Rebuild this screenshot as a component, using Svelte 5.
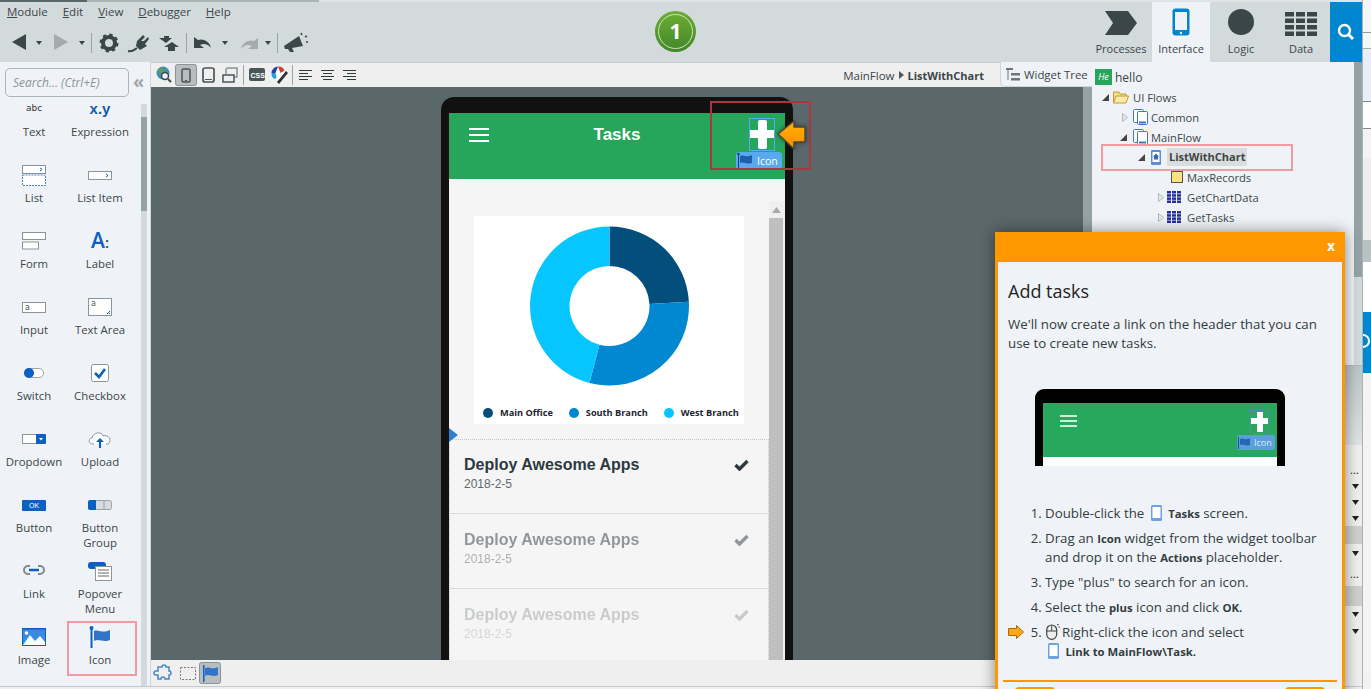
<script>
  const pieData = [
    { color: '#034e7b', from: 0, to: 87 },
    { color: '#0288d1', from: 87, to: 194.6 },
    { color: '#06c5ff', from: 194.6, to: 360 }
  ];
  const cx = 135.5, cy = 90, R = 79.5, r = 40;
  const pt = (rad, a) => {
    const t = ((a - 90) * Math.PI) / 180;
    return `${(cx + rad * Math.cos(t)).toFixed(2)} ${(cy + rad * Math.sin(t)).toFixed(2)}`;
  };
  const slice = (s) => {
    const large = s.to - s.from > 180 ? 1 : 0;
    return `M${pt(R, s.from)} A${R} ${R} 0 ${large} 1 ${pt(R, s.to - 0.001)} L${pt(r, s.to - 0.001)} A${r} ${r} 0 ${large} 0 ${pt(r, s.from)} Z`;
  };
  const legend = [
    { label: 'Main Office', color: '#034e7b' },
    { label: 'South Branch', color: '#0288d1' },
    { label: 'West Branch', color: '#06c5ff' }
  ];
  const tasks = [1, 0.5, 0.22];
  const tree = [
    { d: 0, arrow: 'open', icon: 'folder', text: 'UI Flows' },
    { d: 1, arrow: 'closed', icon: 'flow', text: 'Common' },
    { d: 1, arrow: 'open', icon: 'flow', text: 'MainFlow' },
    { d: 2, arrow: 'open', icon: 'screen', text: 'ListWithChart', sel: true },
    { d: 3, arrow: '', icon: 'var', text: 'MaxRecords' },
    { d: 3, arrow: 'closed', icon: 'table', text: 'GetChartData' },
    { d: 3, arrow: 'closed', icon: 'table', text: 'GetTasks' }
  ];
  const propRows = [
    { h: 17, k: '' }, { h: 16, k: 'dots' }, { h: 16, k: 'arrow' }, { h: 16, k: 'arrow' }, { h: 16, k: 'arrow' },
    { h: 18, k: 'band' }, { h: 18, k: 'arrow' }, { h: 24, k: 'dots' }, { h: 20, k: 'band' }, { h: 16, k: 'arrow' }, { h: 18, k: 'arrow' }
  ];
</script>

<div class="app">
  <div class="main">
    <header class="topbar">
      <div class="top-left">
        <nav class="menu">
          <span><u>M</u>odule</span><span><u>E</u>dit</span><span><u>V</u>iew</span><span><u>D</u>ebugger</span><span><u>H</u>elp</span>
        </nav>
        <div class="tools">
          <svg width="300" height="22" viewBox="0 0 300 22">
            <g transform="translate(-10 -31)" fill="#3b4648">
              <path d="M12 42 L26 34 V50 Z"/><path d="M36 41 h6 l-3 4 Z"/>
              <path d="M54 34 L68 42 L54 50 Z" fill="#a3abad"/><path d="M79 41 h6 l-3 4 Z"/>
              <rect x="91" y="33" width="1" height="20" fill="#9aa4a7"/>
              <circle cx="109" cy="43" r="6" fill="none" stroke="#3b4648" stroke-width="4"/>
              <circle cx="109" cy="43" r="8.2" fill="none" stroke="#3b4648" stroke-width="2.6" stroke-dasharray="3.2 3.24"/>
              <path d="M137 41 L143 35 L145 37 L141 41 L144 41 L148 37 L149 39 L145 44 L147 46 L140 50 L136 46 Z"/>
              <path d="M128 51 C132 52 134 50 137 48" fill="none" stroke="#3b4648" stroke-width="2"/>
              <path d="M159 38 h5 v-2 h5 v2 h3 l-6 5 Z"/><path d="M172 42 L179 47 h-4 v4 h-7 v-4 h-4 Z"/>
              <rect x="186" y="33" width="1" height="20" fill="#9aa4a7"/>
              <path d="M194 37 v11 h10 l-4-3 c4-2 8-1 11 3 c-1-6-7-10-13-8 l-4-3 Z"/><path d="M222 41 h6 l-3 4 Z"/>
              <path d="M258 38 v11 h-10 l4-3 c-4-2-8-1-11 3 c1-6 7-10 13-8 l4-3 Z" fill="#a3abad"/><path d="M265 41 h6 l-3 4 Z"/>
              <rect x="277" y="33" width="1" height="20" fill="#9aa4a7"/>
              <path d="M284 46 L299 36 L303 46 L292 48 L294 52 L290 52 L288 49 L285 49 Z"/>
              <path d="M301 33 l1 2 M305 37 l2-1 M306 42 h2" stroke="#3b4648" stroke-width="1.6"/>
            </g>
          </svg>
        </div>
      </div>
      <div class="tabs">
        <div class="tab">
          <svg width="34" height="26" viewBox="0 0 34 26"><path d="M1 1 H24 L33 13 L24 25 H1 L9 13 Z" fill="#3b4648"/></svg>
          <span>Processes</span>
        </div>
        <div class="tab active">
          <svg width="18" height="28" viewBox="0 0 18 28"><rect x="0.5" y="0.5" width="17" height="27" rx="3" fill="#0086d1"/><rect x="3" y="4" width="12" height="18" fill="#eff3f7"/><circle cx="9" cy="25" r="1.2" fill="#eff3f7"/></svg>
          <span>Interface</span>
        </div>
        <div class="tab">
          <svg width="28" height="28" viewBox="0 0 28 28"><circle cx="14" cy="14" r="13" fill="#3b4648"/></svg>
          <span>Logic</span>
        </div>
        <div class="tab">
          <svg width="32" height="24" viewBox="0 0 32 24" fill="#3b4648">
            <rect x="0" y="0" width="9" height="4.5"/><rect x="11" y="0" width="9" height="4.5"/><rect x="22" y="0" width="10" height="4.5"/>
            <rect x="0" y="6.5" width="9" height="4.5"/><rect x="11" y="6.5" width="9" height="4.5"/><rect x="22" y="6.5" width="10" height="4.5"/>
            <rect x="0" y="13" width="9" height="4.5"/><rect x="11" y="13" width="9" height="4.5"/><rect x="22" y="13" width="10" height="4.5"/>
            <rect x="0" y="19.5" width="9" height="4.5"/><rect x="11" y="19.5" width="9" height="4.5"/><rect x="22" y="19.5" width="10" height="4.5"/>
          </svg>
          <span>Data</span>
        </div>
        <div class="search-tab">
          <svg width="18" height="18" viewBox="0 0 18 18"><circle cx="7.5" cy="7.5" r="5.5" fill="none" stroke="#fff" stroke-width="2.4"/><path d="M11.5 11.5 L16 16" stroke="#fff" stroke-width="3"/></svg>
        </div>
      </div>
    </header>

    <div class="body">
      <aside class="palette">
        <div class="search-row">
          <div class="search">Search... (Ctrl+E)</div>
          <span class="collapse">«</span>
        </div>
        <div class="pal-body">
          <div class="pal-grid">
            <div class="w"><div class="ic"><span class="abc">abc</span></div><span>Text</span></div>
            <div class="w"><div class="ic"><b class="xy">x.y</b></div><span>Expression</span></div>

            <div class="w"><div class="ic"><svg width="24" height="21" viewBox="0 0 24 21"><rect x=".5" y=".5" width="23" height="8" fill="#fff" stroke="#8b9598"/><path d="M18 3 l2 1.5 -2 1.5" fill="none" stroke="#0c60c2"/><rect x=".5" y="10" width="23" height="10.500" fill="#fff" stroke="#4a86c9" stroke-dasharray="2 1"/></svg></div><span>List</span></div>
            <div class="w"><div class="ic"><svg width="24" height="9" viewBox="0 0 24 9"><rect x=".5" y=".5" width="23" height="8" fill="#fff" stroke="#8b9598"/><path d="M18 3 l2 1.500 -2 1.500" fill="none" stroke="#0c60c2"/></svg></div><span>List Item</span></div>

            <div class="w"><div class="ic"><svg width="24" height="18" viewBox="0 0 24 18"><rect x=".5" y=".5" width="23" height="7" fill="#fff" stroke="#8b9598"/><rect x=".5" y="10" width="16" height="7" fill="#fff" stroke="#8b9598"/></svg></div><span>Form</span></div>
            <div class="w"><div class="ic"><b class="a">A<i>:</i></b></div><span>Label</span></div>

            <div class="w"><div class="ic"><svg width="24" height="11" viewBox="0 0 24 11"><rect x=".5" y=".5" width="23" height="10" fill="#fff" stroke="#8b9598"/><text x="3" y="8" font-size="8" font-family="DejaVu Sans" fill="#555">a</text></svg></div><span>Input</span></div>
            <div class="w"><div class="ic"><svg width="24" height="18" viewBox="0 0 24 18"><rect x=".5" y=".5" width="23" height="17" fill="#fff" stroke="#8b9598"/><text x="3" y="8" font-size="8" font-family="DejaVu Sans" fill="#555">a</text><path d="M19 16 l3-3 M21 16 l1-1" stroke="#0c60c2"/></svg></div><span>Text Area</span></div>

            <div class="w"><div class="ic"><svg width="20" height="10" viewBox="0 0 20 10"><rect x=".5" y=".5" width="19" height="9" rx="4.500" fill="#fff" stroke="#9aa4a7"/><circle cx="5" cy="5" r="5" fill="#0c60c2"/></svg></div><span>Switch</span></div>
            <div class="w"><div class="ic"><svg width="18" height="18" viewBox="0 0 18 18"><rect x=".5" y=".5" width="17" height="17" rx="2" fill="#fff" stroke="#8b9598"/><path d="M4 9 L8 13 L14 5" fill="none" stroke="#0c60c2" stroke-width="2.600"/></svg></div><span>Checkbox</span></div>

            <div class="w"><div class="ic"><svg width="24" height="10" viewBox="0 0 24 10"><rect x=".5" y=".5" width="14" height="9" fill="#fff" stroke="#8b9598"/><rect x="14" y="0" width="10" height="10" rx="1" fill="#0c60c2"/><path d="M17 4 h4 l-2 2.500 Z" fill="#fff"/></svg></div><span>Dropdown</span></div>
            <div class="w"><div class="ic"><svg width="24" height="19" viewBox="0 0 24 19"><path d="M6 14 H5 C0 14 0 8 4 8 C5 2 14 1 15 6 C20 4 25 10 20 14 H18" fill="#fff" stroke="#8b9598"/><path d="M12 8 L16 12 H13 V18 H11 V12 H8 Z" fill="#0c60c2"/></svg></div><span>Upload</span></div>

            <div class="w"><div class="ic"><div class="ok">OK</div></div><span>Button</span></div>
            <div class="w"><div class="ic"><svg width="24" height="10" viewBox="0 0 24 10"><rect x=".5" y=".5" width="23" height="9" rx="2" fill="#d8dbdd" stroke="#9aa4a7"/><path d="M16 0 v10" stroke="#9aa4a7"/><path d="M2 0 H8 V10 H2 Q0 10 0 8 V2 Q0 0 2 0Z" fill="#0c60c2"/></svg></div><span>Button Group</span></div>

            <div class="w"><div class="ic up"><svg width="24" height="12" viewBox="0 0 24 12"><path d="M8 2 H6 a4 4 0 0 0 0 8 H8 M16 2 H18 a4 4 0 0 1 0 8 H16" fill="none" stroke="#7f8a8d" stroke-width="2"/><path d="M7 6 H17" stroke="#0c60c2" stroke-width="2.500"/></svg></div><span>Link</span></div>
            <div class="w"><div class="ic"><svg width="24" height="19" viewBox="0 0 24 19"><rect x="0" y="0" width="18" height="7" rx="3" fill="#0c60c2"/><rect x="7.500" y="4.500" width="16" height="14" fill="#fff" stroke="#8b9598"/><path d="M10 8 h11 M10 11 h11 M10 14 h11" stroke="#666"/></svg></div><span>Popover Menu</span></div>

            <div class="w"><div class="ic"><svg width="24" height="18" viewBox="0 0 24 18"><rect x="0" y="0" width="24" height="18" fill="#0c60c2"/><rect x="1" y="1.500" width="22" height="15.500" fill="#3a8ade"/><circle cx="4.500" cy="5" r="1.800" fill="#fff"/><path d="M1 17 L8 7 L13 13 L18 8 L23 14 V17 Z" fill="#fff"/></svg></div><span>Image</span></div>
            <div class="w"><div class="ic"><svg width="22" height="22" viewBox="0 0 22 22"><rect x="1.500" y="1" width="2" height="21" fill="#0c60c2"/><circle cx="2.500" cy="2" r="2" fill="#0c60c2"/><path d="M5 5 C9 3 13 8 21 4 V14 C14 17 10 12 5 15 Z" fill="#2f74c6"/></svg></div><span>Icon</span></div>
          </div>
          <div class="pal-scroll"><div class="pal-thumb"></div></div>
        </div>
      </aside>

      <section class="center">
        <div class="tb2">
          <svg class="tb2-icons" width="205" height="24" viewBox="0 0 205 24">
            <g transform="translate(-156 -63)">
              <circle cx="163" cy="73" r="6.500" fill="#3f8fb5"/><path d="M158 70 q4-3 6 0 l-2 3 -3 0 Z" fill="#6a9f3c"/>
              <circle cx="165" cy="76" r="3.500" fill="#eef" stroke="#3b4648" stroke-width="1.500"/><path d="M168 79 l3 3" stroke="#3b4648" stroke-width="2"/>
              <rect x="175.500" y="64.500" width="21" height="21" rx="2" fill="#b8bec0" stroke="#8c9496"/>
              <rect x="182" y="69" width="8" height="13" rx="1.500" fill="none" stroke="#4a5558" stroke-width="1.500"/><rect x="185" y="80" width="2" height="1" fill="#4a5558"/>
              <rect x="203" y="68" width="11" height="14" rx="2" fill="none" stroke="#4a5558" stroke-width="1.700"/><rect x="205" y="79" width="7" height="1" fill="#4a5558"/>
              <path d="M226 74 v-4 q0-2 2-2 h9 v9 h-3" fill="none" stroke="#8c9496" stroke-width="1.500"/><rect x="223" y="75" width="11" height="7" fill="none" stroke="#4a5558" stroke-width="1.500"/>
              <rect x="243" y="65" width="1" height="20" fill="#9aa4a7"/>
              <rect x="249" y="68" width="16" height="13" rx="2" fill="#4a5558"/>
              <text x="250.500" y="77.500" font-size="7" font-weight="700" font-family="Liberation Sans" fill="#fff">CSS</text>
              <circle cx="278" cy="73" r="6.500" fill="#fff"/>
              <path d="M278 66.500 a6.500 6.500 0 0 0 -6.500 6.500 h4 Z" fill="#2b3f9f"/><path d="M278 66.500 a6.500 6.500 0 0 1 6.500 4 l-4 2.500 Z" fill="#d33b32"/><path d="M271.500 73 h4 l1 5 -2 1 a6.500 6.500 0 0 1 -3-6 Z" fill="#1e9fe0"/>
              <path d="M277 82 L286 71 L288 73 L279 84 Z" fill="#333"/>
              <rect x="292" y="65" width="1" height="20" fill="#9aa4a7"/>
              <path d="M299 70.500 h13 M299 73.500 h9 M299 76.500 h13 M299 79.500 h9 M321 70.500 h13 M323 73.500 h9 M321 76.500 h13 M323 79.500 h9 M343 70.500 h13 M347 73.500 h9 M343 76.500 h13 M347 79.500 h9" stroke="#2f3a3c"/>
            </g>
          </svg>
          <div class="crumb"><span>MainFlow</span><svg width="5" height="8" viewBox="0 0 5 8"><path d="M0 0 L5 4 L0 8 Z" fill="#555"/></svg><b>ListWithChart</b></div>
          <div class="wtree">
            <svg width="14" height="13" viewBox="0 0 14 13" fill="#6c777a"><rect x="0" y="0" width="7" height="2"/><rect x="1.500" y="0" width="1" height="12"/><rect x="5" y="5" width="9" height="2.500"/><rect x="5" y="10" width="9" height="2.500"/></svg>
            <span>Widget Tree</span>
          </div>
        </div>
        <div class="canvas-row">
          <div class="canvas">
            <div class="phone">
              <div class="screen">
                <div class="app-head">
                  <div class="burger"><i></i><i></i><i></i></div>
                  <div class="title">Tasks</div>
                  <div class="plus-wrap">
                    <div class="plus"><i class="ph"></i><i class="pv"></i></div>
                    <div class="icon-tag">
                      <svg width="16" height="15" viewBox="0 0 16 15"><rect x="1" y="0" width="1" height="15" fill="#0c3f8a"/><circle cx="1.500" cy="1" r="1.300" fill="#0c3f8a"/><path d="M3 3 C6 1 10 5 15 2 V10 C10 12 6 8 3 10 Z" fill="#1f5ea8"/></svg>
                      <span>Icon</span>
                    </div>
                  </div>
                </div>
                <div class="content">
                  <div class="content-main">
                    <div class="card">
                      <svg width="270" height="184" viewBox="0 0 270 184">
                        {#each pieData as s}<path d={slice(s)} fill={s.color}/>{/each}
                      </svg>
                      <div class="legend">
                        {#each legend as l}
                          <div class="leg"><i style="background:{l.color}"></i><span>{l.label}</span></div>
                        {/each}
                      </div>
                    </div>
                    <div class="list">
                      {#each tasks as op}
                        <div class="row">
                          <div class="row-text" style="opacity:{op}">
                            <div class="task">Deploy Awesome Apps</div>
                            <div class="date">2018-2-5</div>
                          </div>
                          <svg style="opacity:{op}" width="15" height="12" viewBox="0 0 15 12"><path d="M1.500 6 L5.500 10 L13.500 2" fill="none" stroke="#2c3a40" stroke-width="3.400"/></svg>
                        </div>
                      {/each}
                    </div>
                  </div>
                  <div class="phone-scroll">
                    <svg width="9" height="6" viewBox="0 0 9 6"><path d="M0 6 L4.500 0 L9 6 Z" fill="#aaa"/></svg>
                    <div class="phone-thumb"></div>
                  </div>
                </div>
              </div>
            </div>
          </div>
          <div class="canvas-scroll"></div>
        </div>
        <div class="bottom-bar">
          <svg width="70" height="24" viewBox="0 0 70 24">
            <path d="M6 6 h4 a2 2 0 0 1 4 0 h3 v4 a2 2 0 0 1 0 4 v4 h-4 a2 2 0 0 0 -4 0 h-3 v-4 h-2 a2 2 0 0 1 0 -4 h2 Z" fill="none" stroke="#4a86c9" stroke-width="1.500"/>
            <rect x="28.500" y="6.500" width="15" height="12" fill="none" stroke="#777" stroke-dasharray="2 1.500"/>
            <rect x="47.500" y="1.500" width="21" height="21" rx="2" fill="#b8bec0" stroke="#8c9496"/>
            <rect x="51" y="4" width="1.500" height="17" fill="#0c60c2"/><path d="M53 7 C57 5 61 9 66 6 V14 C61 17 57 12 53 15 Z" fill="#2f74c6"/>
          </svg>
        </div>
      </section>

      <aside class="side">
        <div class="tree-wrap">
          <div class="tree">
            <div class="tree-root"><div class="he">He</div><span>hello</span></div>
            {#each tree as t}
              <div class="node" style="padding-left:{10 + t.d * 18}px">
                <span class="tw">
                  {#if t.arrow === 'open'}<svg width="7" height="7" viewBox="0 0 7 7"><path d="M7 0 V7 H0 Z" fill="#444"/></svg>
                  {:else if t.arrow === 'closed'}<svg class="closed" width="6" height="9" viewBox="0 0 6 9"><path d="M.5 .5 L5.500 4.500 L.5 8.500 Z" fill="#e6e9ec" stroke="#b5b9bc"/></svg>{/if}
                </span>
                <span class="ni">
                  {#if t.icon === 'folder'}
                    <svg width="16" height="13" viewBox="0 0 16 13"><path d="M.5 12 V1 H6 L7 3 H13 V5" fill="#f4dc90" stroke="#c79a2c"/><path d="M.5 12 L3 5 H15.500 L13 12 Z" fill="#fbe9ae" stroke="#c79a2c"/></svg>
                  {:else if t.icon === 'flow'}
                    <svg class="shift2" width="15" height="16" viewBox="0 0 15 16"><rect x=".5" y=".5" width="10" height="13" rx="1" fill="#fff" stroke="#3a78c4"/><rect x="4.500" y="2.500" width="10" height="13" rx="1" fill="#fff" stroke="#3a78c4"/><rect x="6" y="12.500" width="7" height="2" fill="#3a78c4"/></svg>
                  {:else if t.icon === 'screen'}
                    <svg class="shift2" width="10" height="15" viewBox="0 0 10 15"><rect width="10" height="15" rx="1" fill="#5e8fd6"/><rect x="1.500" y="2" width="7" height="10" fill="#fff"/><path d="M5 3.500 L8 6.500 H7 V9.500 H3 V6.500 H2 Z" fill="#3a68b4"/></svg>
                  {:else if t.icon === 'var'}
                    <svg class="shift3" width="12" height="12" viewBox="0 0 12 12"><rect x=".5" y=".5" width="11" height="11" fill="#fbe27a" stroke="#555"/></svg>
                  {:else}
                    <svg width="14" height="12" viewBox="0 0 14 12" fill="#262fa0"><rect width="4" height="2.500"/><rect x="5" width="4" height="2.500"/><rect x="10" width="4" height="2.500"/><rect y="3.200" width="4" height="2.500"/><rect x="5" y="3.200" width="4" height="2.500"/><rect x="10" y="3.200" width="4" height="2.500"/><rect y="6.400" width="4" height="2.500"/><rect x="5" y="6.400" width="4" height="2.500"/><rect x="10" y="6.400" width="4" height="2.500"/><rect y="9.500" width="4" height="2.500"/><rect x="5" y="9.500" width="4" height="2.500"/><rect x="10" y="9.500" width="4" height="2.500"/></svg>
                  {/if}
                </span>
                <span class:sel={t.sel}>{t.text}</span>
              </div>
            {/each}
          </div>
          <div class="tree-scroll"><div class="tree-thumb"></div></div>
        </div>
        <div class="props">
          <div class="props-head"></div>
          {#each propRows as p}
            <div class="prow" class:band={p.k === 'band'} style="height:{p.h}px">
              {#if p.k === 'arrow'}<svg width="7" height="5" viewBox="0 0 7 5"><path d="M0 0 H7 L3.500 5 Z" fill="#222"/></svg>{/if}
              {#if p.k === 'dots'}<span>...</span>{/if}
            </div>
          {/each}
        </div>
      </aside>
    </div>
    <div class="footer"></div>
  </div>

  <div class="edge">
    <div class="e1"></div><div class="e2"></div><div class="e3"></div><div class="e4"></div><div class="e5"></div>
    <div class="e6"></div><div class="e7"></div><div class="e8"></div>
    <div class="e9"><i></i></div><div class="e10"></div>
  </div>

  <div class="badge"><span>1</span></div>
  <div class="hl hl-tree"></div>
  <div class="hl hl-pal"></div>
  <div class="hl hl-plus"></div>
  <svg class="orange-arrow" width="32" height="34" viewBox="0 0 32 34">
    <defs><linearGradient id="oa" x1="0" y1="0" x2="0" y2="1"><stop offset="0" stop-color="#ffb400"/><stop offset="1" stop-color="#ff8a00"/></linearGradient></defs>
    <path d="M2 15 L18 2 V8 H29 V23 H18 V30 Z" fill="url(#oa)" stroke="#4a4a3a" stroke-width="1.500" stroke-linejoin="round"/>
  </svg>
  <svg class="blue-tri" width="9" height="14" viewBox="0 0 9 14"><path d="M0 0 L9 7 L0 14 Z" fill="#2f80d0"/></svg>

  <div class="popup">
    <div class="pop-head"><span>x</span></div>
    <div class="pop-body">
      <h2>Add tasks</h2>
      <p>We'll now create a link on the header that you can use to create new tasks.</p>
      <div class="mini">
        <div class="mini-screen">
          <div class="mini-head">
            <div class="mini-burger"><i></i><i></i><i></i></div>
            <div class="mini-right">
              <div class="mini-plus"><i class="mh"></i><i class="mv"></i></div>
              <div class="mini-tag">
                <svg width="14" height="12" viewBox="0 0 14 12"><rect x="1" y="0" width="1" height="12" fill="#1d4f8f"/><path d="M3 2 C6 0 9 4 13 1 V8 C9 10 6 6 3 8 Z" fill="#2468b5"/></svg>
                <span>Icon</span>
              </div>
            </div>
          </div>
        </div>
      </div>
      <ol>
        <li>Double-click the <svg class="inl" width="11" height="16" viewBox="0 0 11 16"><rect width="11" height="16" rx="1.500" fill="#6ea2e0"/><rect x="1.500" y="2" width="8" height="11" fill="#fff"/></svg> <b>Tasks</b> screen.</li>
        <li>Drag an <b>Icon</b> widget from the widget toolbar and drop it on the <b>Actions</b> placeholder.</li>
        <li>Type "plus" to search for an icon.</li>
        <li>Select the <b>plus</b> icon and click <b>OK.</b></li>
        <li class="cur">
          <svg class="cur-arrow" width="16" height="14" viewBox="0 0 16 14"><path d="M.5 3.500 H8.500 V.5 L15.500 7 L8.500 13.500 V10.500 H.5 Z" fill="#ffa91a" stroke="#a86a00"/></svg>
          <svg class="inl mouse" width="14" height="16" viewBox="0 0 14 16"><rect x=".7" y="1" width="10" height="14.300" rx="5" fill="#eee" stroke="#444" stroke-width="1.200"/><path d="M5.700 1 V7 M.7 7 H10.700" stroke="#444"/><path d="M11 1 l2-1 M12.500 3 h1.500" stroke="#444"/></svg>Right-click the icon and select<br/>
          <svg class="inl" width="11" height="16" viewBox="0 0 11 16"><rect width="11" height="16" rx="1.500" fill="#6ea2e0"/><rect x="1.500" y="2" width="8" height="11" fill="#fff"/></svg> <b>Link to MainFlow\Task.</b>
        </li>
      </ol>
      <div class="pop-line"></div>
      <div class="pop-btns"><i></i><i></i></div>
    </div>
  </div>
</div>

<style>
  :global(body) { margin: 0; }
  .app { position: relative; width: 1371px; height: 689px; overflow: hidden; display: flex; font-family: "Open Sans", sans-serif; font-size: 11.4px; color: #3b4648; background: #eee; }
  .main { width: 1362px; flex: none; display: flex; flex-direction: column; }

  .topbar { height: 62px; flex: none; box-sizing: border-box; display: flex; justify-content: space-between; background: #d3dadc; border-top: 2px solid; border-image: linear-gradient(90deg, #59666a 0 88px, #aab4b7 88px 320px, #dfe4e6 320px) 1; }
  .menu { display: flex; gap: 15px; padding: 1px 0 0 7px; height: 19px; line-height: 18px; font-size: 11.5px; }
  .tools { padding: 9px 0 0 10px; line-height: 0; }
  .tabs { display: flex; }
  .tab { width: 58px; margin-right: 2px; display: flex; flex-direction: column; align-items: center; box-sizing: border-box; height: 60px; justify-content: flex-end; padding-bottom: 6px; gap: 5px; font-size: 11px; }
  .tab.active { background: #eff3f7; }
  .search-tab { width: 32px; margin-left: -2px; background: #0086d1; display: flex; align-items: center; justify-content: center; }

  .body { flex: 1; min-height: 0; display: flex; }
  .footer { height: 3px; flex: none; background: #eee; border-top: 1px solid #c3cbce; box-sizing: border-box; }

  .palette { width: 151px; flex: none; box-sizing: border-box; background: #eff3f7; border-right: 1px solid #cdd5d8; display: flex; flex-direction: column; }
  .search-row { height: 37px; flex: none; display: flex; align-items: flex-start; padding: 6px 0 0 5px; box-sizing: border-box; }
  .search { width: 124px; height: 29px; box-sizing: border-box; border: 1px solid #aab5b8; border-radius: 5px; background: #eff3f7; font-style: italic; font-size: 12px; line-height: 27px; padding-left: 7px; color: #8b9598; }
  .collapse { margin-left: 4px; font-size: 18px; line-height: 27px; font-weight: 700; color: #9aa6a9; }
  .pal-body { flex: 1; display: flex; min-height: 0; overflow: hidden; }
  .pal-grid { width: 141px; flex: none; padding-left: 1px; box-sizing: border-box; display: grid; grid-template-columns: 66px 66px; grid-auto-rows: 66px; }
  .w { display: flex; flex-direction: column; align-items: center; text-align: center; line-height: 15px; }
  .w > span { display: block; width: 60px; }
  .ic { height: 20px; margin-bottom: 5px; flex: none; display: flex; align-items: center; justify-content: center; }
  .ic.up svg { margin-top: -3px; }
  .abc { font-family: "DejaVu Sans", sans-serif; font-size: 9px; margin-top: -2px; color: #333; }
  .xy { font-size: 15px; font-family: "Liberation Sans", sans-serif; color: #1259a9; margin-top: -2px; }
  .a { font-size: 21px; line-height: 22px; font-family: "Open Sans", sans-serif; font-weight: 600; color: #0c60c2; }
  .a i { font-style: normal; font-size: 15px; color: #3b4648; }
  .ok { width: 24px; height: 11px; background: #0c60c2; border-radius: 1px; color: #fff; font-size: 7px; line-height: 11px; text-align: center; font-family: "Liberation Sans", sans-serif; }
  .pal-scroll { width: 6px; margin-top: 5px; background: #d3dadc; }
  .pal-thumb { height: 94px; margin-top: 13px; background: #95a3a6; }

  .center { width: 941px; flex: none; display: flex; flex-direction: column; min-height: 0; }
  .tb2 { height: 25px; flex: none; display: flex; align-items: center; background: #efefef; border-top: 1px solid #c6ced1; box-sizing: border-box; padding-left: 5px; }
  .tb2-icons { flex: none; margin-top: 0; }
  .crumb { margin-left: auto; display: flex; align-items: center; gap: 4px; margin-right: 16px; white-space: nowrap; font-size: 11.5px; }
  .crumb b { font-weight: 700; font-size: 11px; }
  .wtree { width: 92px; height: 25px; margin-top: -1px; flex: none; box-sizing: border-box; background: #eff3f7; border-left: 1px solid #cdd5d8; border-bottom: 1px solid #cdd5d8; border-bottom-left-radius: 5px; display: flex; align-items: center; gap: 4px; padding-left: 5px; white-space: nowrap; }
  .canvas-row { flex: 1; min-height: 0; display: flex; }
  .canvas { flex: 1; background: #5a676b; padding: 10px 0 0 290px; overflow: hidden; box-sizing: border-box; }
  .canvas-scroll { width: 9px; background: #95a3a6; }
  .bottom-bar { height: 26px; flex: none; background: #efefef; display: flex; align-items: center; padding: 0 0 0 1px; line-height: 0; }

  .phone { width: 352px; height: 573px; box-sizing: border-box; background: #111; border-radius: 13px 13px 0 0; padding: 16px 8px 0; }
  .screen { height: 557px; background: #f5f5f5; display: flex; flex-direction: column; font-family: "Liberation Sans", sans-serif; }
  .app-head { height: 66px; flex: none; background: #26a65b; display: grid; grid-template-columns: 1fr auto 1fr; }
  .burger { margin: 15px 0 0 20px; width: 20px; display: flex; flex-direction: column; gap: 4px; }
  .burger i { display: block; height: 2px; background: #fff; }
  .title { color: #fff; font-weight: 700; font-size: 17px; line-height: 20px; margin-top: 12px; }
  .plus-wrap { position: relative; justify-self: end; margin: 5px 10px 0 0; width: 26px; }
  .plus { position: relative; width: 26px; height: 33px; box-sizing: border-box; border: 1px solid #5ba8f5; }
  .ph { position: absolute; left: 0; right: 0; top: 11px; height: 8px; background: #fff; }
  .pv { position: absolute; left: 8px; width: 9px; top: 1px; bottom: 1px; background: #fff; border-radius: 2px; }
  .icon-tag { position: absolute; left: -13px; top: 34px; width: 46px; height: 17px; box-sizing: border-box; background: #5aa8f0; border-radius: 3px 3px 0 0; display: flex; align-items: center; gap: 4px; padding-left: 1px; color: #fff; font-size: 10.5px; font-family: "Open Sans", sans-serif; }
  .content { flex: 1; min-height: 0; display: flex; overflow: hidden; }
  .content-main { width: 320px; flex: none; }
  .card { width: 270px; height: 208px; margin: 37px 0 15px 25px; background: #fff; line-height: 0; }
  .legend { display: flex; height: 24px; align-items: center; padding: 2px 0 0 9px; box-sizing: border-box; gap: 16px; }
  .leg { display: flex; align-items: center; gap: 7px; font: 700 9.2px/12px "Open Sans", sans-serif; color: #1c2530; white-space: nowrap; }
  .leg i { width: 10px; height: 10px; border-radius: 50%; display: block; }
  .list { border: 1px dotted #c3c8ca; border-bottom: 0; }
  .row { height: 74px; display: flex; align-items: flex-start; justify-content: space-between; padding: 0 19px 0 14px; border-bottom: 1px solid #d5dde0; }
  .row:first-child { height: 73px; }
  .row-text { padding-top: 16px; }
  .row:first-child .row-text { padding-top: 15px; }
  .row > svg { margin-top: 20px; }
  .row:first-child > svg { margin-top: 19px; }
  .task { font-weight: 700; font-size: 16px; line-height: 20px; color: #2c3a40; }
  .date { font-size: 12px; line-height: 16px; margin-top: 1px; color: #5f6b70; }
  .phone-scroll { flex: 1; margin-top: 22px; display: flex; flex-direction: column; align-items: center; background: #f0f0f0; padding-right: 2px; }
  .phone-scroll svg { margin-top: 6px; flex: none; }
  .phone-thumb { width: 100%; flex: 1; margin-top: 5px; background: #bfbfbf; }

  .side { flex: 1; min-width: 0; display: flex; flex-direction: column; background: #eff3f7; }
  .tree-wrap { height: 303px; flex: none; display: flex; }
  .tree { flex: 1; padding-top: 5px; }
  .tree-root { height: 20px; display: flex; align-items: center; padding-left: 3px; gap: 3px; font-size: 12px; }
  .he { width: 17px; height: 16px; background: #26a65b; color: #fff; font: italic 9px/16px "Open Sans", sans-serif; text-align: center; }
  .node { height: 20px; display: flex; align-items: center; white-space: nowrap; font-size: 11.2px; }
  .tw { width: 11px; flex: none; display: flex; align-items: center; }
  .closed { margin-left: 2px; }
  .ni { width: 20px; flex: none; display: flex; align-items: center; }
  .shift2 { margin-left: 2px; }
  .shift3 { margin-left: 4px; }
  .sel { background: #dadcdd; font-weight: 700; font-size: 11px; padding: 0 2px; margin-left: -2px; line-height: 18px; }
  .tree-scroll { width: 8px; background: #d3dadc; }
  .tree-thumb { height: 215px; background: #95a3a6; }
  .props { flex: 1; background: #efefef; text-align: right; }
  .props-head { height: 80px; background: linear-gradient(180deg, #bcc4c6, #dfe3e4); border-top: 1px solid #b5bcbe; box-sizing: border-box; }
  .prow { display: flex; align-items: center; justify-content: flex-end; padding-right: 3px; box-sizing: border-box; color: #222; line-height: 1; }
  .prow.band { background: #cfcfcf; }

  .edge { flex: 1; display: flex; flex-direction: column; background: #f2f2f2; border-left: 1px solid #a9b2b5; }
  .edge div { flex: none; }
  .e1 { height: 32px; background: #f7f7f7; border-bottom: 1px solid #999; }
  .e2 { height: 15px; background: #f7f7f7; border-bottom: 1px solid #aaa; }
  .e3 { height: 52px; background: #e9eef8; border-bottom: 1px solid #888; }
  .e4 { height: 26px; background: #fff; border-bottom: 1px solid #888; }
  .e5 { height: 29px; background: #f3f3f3; }
  .e6 { height: 82px; background: #eeeeee; }
  .e7 { height: 22px; background: #b9c1c3; }
  .e8 { height: 50px; background: #fff; }
  .e9 { height: 61px; background: #0086d1; position: relative; overflow: hidden; }
  .e9 i { position: absolute; left: -7px; top: 22px; width: 10px; height: 10px; border: 2px solid #fff; border-radius: 50%; }
  .e10 { height: 300px; background: #f4f4f4; }

  .badge { position: absolute; left: 655px; top: 11px; width: 41px; height: 41px; border-radius: 50%; background: linear-gradient(180deg, #6cae34, #43862a); display: flex; align-items: center; justify-content: center; }
  .badge span { width: 35px; height: 35px; box-sizing: border-box; border: 1px solid #cfe3b9; border-radius: 50%; color: #fff; font: 700 21px/33px "Open Sans", sans-serif; text-align: center; }
  .hl { position: absolute; box-sizing: border-box; border: 2px solid #f39a9f; }
  .hl-tree { left: 1101px; top: 144px; width: 192px; height: 27px; }
  .hl-pal { left: 67px; top: 621px; width: 70px; height: 55px; }
  .hl-plus { left: 710px; top: 101px; width: 101px; height: 69px; border-color: #a8383c; }
  .orange-arrow { position: absolute; left: 776px; top: 119px; filter: drop-shadow(0 0 2px rgba(30,30,20,.7)); }
  .blue-tri { position: absolute; left: 449px; top: 428px; }

  .popup { position: absolute; left: 995px; top: 232px; width: 350px; height: 470px; display: flex; flex-direction: column; box-shadow: 0 0 14px rgba(0,0,0,.45); font-size: 13.3px; color: #333c40; }
  .pop-head { height: 30px; flex: none; background: #ff9800; color: #fff; font-weight: 700; text-align: right; padding-right: 10px; line-height: 28px; }
  .pop-body { flex: 1; background: #eff3f7; border: 3px solid #ff9800; border-width: 0 3px; padding: 17px 10px 0; }
  h2 { margin: 0; font-size: 18px; font-weight: 400; line-height: 24px; color: #222; }
  p { margin: 12px 0 0; line-height: 19px; }
  .mini { width: 250px; height: 77px; margin: 36px 0 0 27px; box-sizing: border-box; background: #000; border-radius: 9px 9px 0 0; padding: 14px 8px 0; }
  .mini-screen { height: 63px; background: #fff; }
  .mini-head { height: 54px; background: #28a85c; display: flex; justify-content: space-between; }
  .mini-burger { margin: 12px 0 0 17px; width: 17px; display: flex; flex-direction: column; gap: 3px; }
  .mini-burger i { display: block; height: 2px; background: #cfeeda; }
  .mini-right { position: relative; width: 34px; }
  .mini-plus { position: absolute; left: 7px; top: 7px; width: 19px; height: 24px; border: 1px solid #4f8fa8; box-sizing: border-box; }
  .mh { position: absolute; left: 0; right: 0; top: 7px; height: 6px; background: #fff; }
  .mv { position: absolute; left: 6px; width: 6px; top: 1px; bottom: 1px; background: #fff; }
  .mini-tag { position: absolute; left: -6px; top: 32px; width: 38px; height: 15px; background: #5a9fd8; border-radius: 2px; color: #d8ecff; font-size: 9px; display: flex; align-items: center; gap: 3px; }
  ol { margin: 38px 0 0; padding: 0 0 0 37px; line-height: 19px; }
  li { margin-bottom: 6px; }
  li::marker { font-size: 13px; }
  li b { font-size: 11.3px; font-weight: 700; }
  .inl { vertical-align: -3px; margin: 0 3px; }
  .mouse { margin-left: 1px; margin-right: 2px; }
  .cur { position: relative; }
  .cur-arrow { position: absolute; left: -37px; top: 2px; }
  .pop-line { height: 2px; background: #ff9800; margin: 19px -5px 0; }
  .pop-btns { display: flex; justify-content: space-between; padding: 5px 7px 0; }
  .pop-btns i { display: block; width: 40px; height: 12px; background: #ff9800; border-radius: 4px; }
</style>
